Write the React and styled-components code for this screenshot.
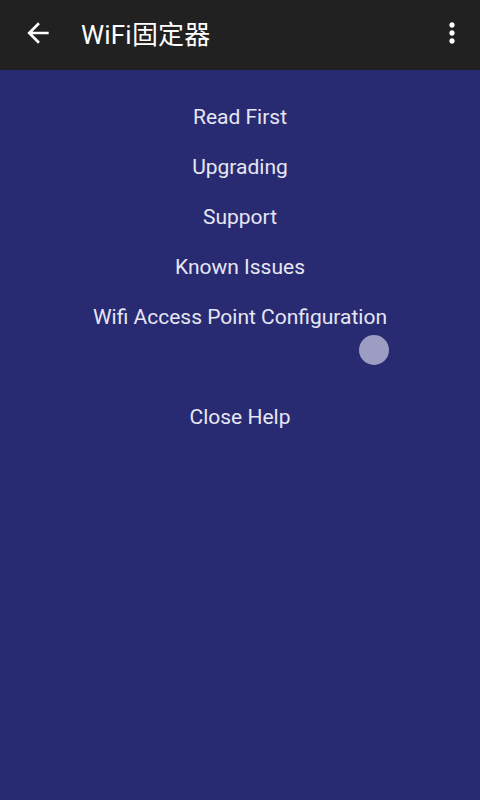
import React from 'react';
import styled, { createGlobalStyle } from 'styled-components';

const Global = createGlobalStyle`
  html, body {
    margin: 0;
    padding: 0;
    background: #292b72;
  }
  #root {
    min-height: 800px;
  }
`;

const Screen = styled.div`
  width: 480px;
  height: 800px;
  background: #292b72;
  font-family: Roboto, "Noto Sans CJK SC", sans-serif;
  display: flex;
  flex-direction: column;
  overflow: hidden;
`;

const Toolbar = styled.header`
  height: 70px;
  background: #212121;
  display: flex;
  align-items: center;
  padding: 0 12px 0 22px;
  box-sizing: border-box;
  flex-shrink: 0;
`;

const IconButton = styled.div`
  width: 32px;
  height: 32px;
  display: flex;
  align-items: center;
  justify-content: center;
  margin-top: -4px;
`;

const Title = styled.h1`
  margin: -6px 0 0 27px;
  flex: 1;
  font-size: 26px;
  font-weight: 400;
  color: #ffffff;
  letter-spacing: 0.2px;
`;

const Menu = styled.nav`
  display: flex;
  flex-direction: column;
  align-items: center;
  padding-top: 22px;
`;

const Item = styled.div`
  height: 50px;
  line-height: 50px;
  font-size: 21px;
  color: #e6e6f2;
  text-align: center;
`;

const Spacer = styled.div`
  height: 50px;
  width: 100%;
  position: relative;
`;

const Touch = styled.div`
  position: absolute;
  left: 359px;
  top: -7px;
  width: 30px;
  height: 30px;
  border-radius: 50%;
  background: #9d9dc4;
`;

const ArrowBack = () => (
  <svg width="32" height="32" viewBox="0 0 24 24" fill="#ffffff">
    <path d="M20 11H7.83l5.59-5.59L12 4l-8 8 8 8 1.41-1.41L7.83 13H20v-2z" />
  </svg>
);

const MoreVert = () => (
  <svg width="32" height="32" viewBox="0 0 24 24" fill="#ffffff">
    <path d="M12 8c1.1 0 2-.9 2-2s-.9-2-2-2-2 .9-2 2 .9 2 2 2zm0 2c-1.1 0-2 .9-2 2s.9 2 2 2 2-.9 2-2-.9-2-2-2zm0 6c-1.1 0-2 .9-2 2s.9 2 2 2 2-.9 2-2-.9-2-2-2z" />
  </svg>
);

const items = ['Read First', 'Upgrading', 'Support', 'Known Issues', 'Wifi Access Point Configuration'];

export default function App() {
  return (
    <Screen>
      <Global />
      <Toolbar>
        <IconButton><ArrowBack /></IconButton>
        <Title>WiFi固定器</Title>
        <IconButton><MoreVert /></IconButton>
      </Toolbar>
      <Menu>
        {items.map(t => (
          <Item key={t}>{t}</Item>
        ))}
        <Spacer><Touch /></Spacer>
        <Item>Close Help</Item>
      </Menu>
    </Screen>
  );
}
